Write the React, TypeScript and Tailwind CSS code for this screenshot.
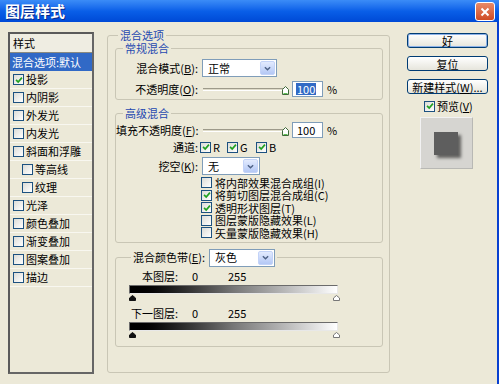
import React from 'react'

const Check = ({ on }: { on?: boolean }) => (
  <span className="w-[11px] h-[11px] border border-[#1c5180] bg-linear-to-br from-[#dcdcd7] to-white flex items-center justify-center shrink-0">
    {on && (
      <svg viewBox="0 0 9 9" className="w-[8px] h-[8px]">
        <path d="M1.2 4.3 L3.6 6.8 L7.8 1.8" stroke="#21a121" strokeWidth="1.9" fill="none" />
      </svg>
    )}
  </span>
)

const Select = ({ value, w }: { value: string; w: string }) => (
  <div className={`${w} h-[18px] bg-white border border-[#7f9db9] flex items-center shrink-0`}>
    <span className="flex-1 pl-[5px] text-[11px] leading-[13px]">{value}</span>
    <span className="w-[15px] h-[14px] mr-[1px] rounded-[2px] bg-linear-to-b from-[#e3ebfe] to-[#b4c8f5] border border-[#c3d3f8] flex items-center justify-center">
      <svg viewBox="0 0 8 5" className="w-[7px] h-[5px]">
        <path d="M1 1 L4 4 L7 1" stroke="#4d6185" strokeWidth="1.6" fill="none" />
      </svg>
    </span>
  </div>
)

const Slider = () => (
  <div className="flex items-center h-[16px] w-[87px] ml-[1px]">
    <div className="w-[81px] h-[3px] border-t border-t-[#9d9a8a] border-b border-b-white bg-[#dedbc9]" />
    <svg viewBox="0 0 7 9" className="w-[7px] h-[9px] -ml-[2px] mt-[2px]">
      <path d="M0.5 8.5 V3.5 L3.5 0.5 L6.5 3.5 V8.5 Z" fill="#ffffff" stroke="#3f6a3a" strokeWidth="1" />
      <path d="M1.5 7.5 H5.5" stroke="#5fbf55" strokeWidth="1" />
    </svg>
  </div>
)

const Num = ({ sel }: { sel?: boolean }) => (
  <div className="w-[31px] h-[16px] bg-white border border-[#7f9db9] flex items-center pl-[3px] ml-[2px]">
    <span className={sel ? 'bg-[#316ac5] text-white text-[11px] leading-[12px] px-[1px]' : 'text-[11px] leading-[12px] px-[1px]'}>100</span>
  </div>
)

const Label = ({ children }: { children: React.ReactNode }) => (
  <span className="w-[82px] text-right shrink-0 whitespace-nowrap">{children}</span>
)

const Legend = ({ children }: { children: React.ReactNode }) => (
  <legend className="ml-[7px] px-[2px] text-[#1f48b0] leading-[14px]">{children}</legend>
)

const LevelBar = ({ label }: { label: string }) => (
  <>
    <div className="flex items-center h-[13px]">
      <span className="w-[62px] text-right">{label}</span>
      <span className="ml-[14px] w-[36px]">0</span>
      <span>255</span>
    </div>
    <div className="ml-[13px] mt-[2px] w-[209px] h-[9px] border border-t-[#6b6b6b] border-l-[#6b6b6b] border-r-[#e8e8e8] border-b-[#e8e8e8] bg-linear-to-r from-black via-[#777] to-white" />
    <div className="ml-[13px] mt-[1px] w-[211px] h-[6px] flex justify-between">
      <svg viewBox="0 0 7 6" className="w-[7px] h-[6px]">
        <path d="M0.5 5.5 V3 L3.5 0.5 L6.5 3 V5.5 Z" fill="#111" stroke="#111" />
      </svg>
      <svg viewBox="0 0 7 6" className="w-[7px] h-[6px]">
        <path d="M0.5 5.5 V3 L3.5 0.5 L6.5 3 V5.5 Z" fill="#fff" stroke="#777" />
      </svg>
    </div>
  </>
)

const items: [string, boolean, boolean][] = [
  ['投影', true, false],
  ['内阴影', false, false],
  ['外发光', false, false],
  ['内发光', false, false],
  ['斜面和浮雕', false, false],
  ['等高线', false, true],
  ['纹理', false, true],
  ['光泽', false, false],
  ['颜色叠加', false, false],
  ['渐变叠加', false, false],
  ['图案叠加', false, false],
  ['描边', false, false],
]

const opts: [string, boolean][] = [
  ['将内部效果混合成组(I)', false],
  ['将剪切图层混合成组(C)', true],
  ['透明形状图层(T)', true],
  ['图层蒙版隐藏效果(L)', false],
  ['矢量蒙版隐藏效果(H)', false],
]

const Btn = ({ children, def }: { children: React.ReactNode; def?: boolean }) => (
  <div
    className={
      def
        ? 'h-[15px] rounded-[3px] border border-[#003c74] bg-linear-to-b from-white to-[#e6e5dc] shadow-[inset_0_0_0_1px_#8db2e8] flex items-center justify-center text-[11px] leading-[12px]'
        : 'h-[15px] rounded-[3px] border border-[#003c74] bg-linear-to-b from-white to-[#e6e5dc] flex items-center justify-center text-[11px] leading-[12px]'
    }
  >
    {children}
  </div>
)

export default function App() {
  return (
    <div className="w-[499px] h-[384px] bg-[#ece9d8] overflow-hidden flex flex-col font-['Noto_Sans_CJK_SC',sans-serif] text-[11px] leading-[13px] text-black">
      <div className="h-[22px] shrink-0 flex items-center justify-between pl-[5px] pr-[4px] bg-linear-to-b from-[#3b8cf7] via-[#0a5fe8] to-[#0049d6]">
        <span className="text-white text-[15px] font-bold leading-[18px] [text-shadow:1px_1px_0_#0a2a8a]">图层样式</span>
        <span className="w-[20px] h-[19px] rounded-[3px] border border-white bg-linear-to-b from-[#e88a68] to-[#cf4a22] flex items-center justify-center mt-[1px]">
          <svg viewBox="0 0 10 10" className="w-[10px] h-[10px]">
            <path d="M1.5 1.5 L8.5 8.5 M8.5 1.5 L1.5 8.5" stroke="white" strokeWidth="2" />
          </svg>
        </span>
      </div>

      <div className="flex-1 flex border-r-2 border-[#0840d0]">
        {/* style list */}
        <div className="ml-[8px] mt-[10px] w-[86px] h-[342px] border-2 border-t-[#5a5a5a] border-l-[#5a5a5a] border-r-[#666] border-b-[#666] flex flex-col bg-[#ece9d8]">
          <div className="h-[19px] flex items-center pl-[3px] border-b border-[#8a8a80] bg-[#efede2]">样式</div>
          <div className="h-[18px] flex items-center pl-[2px] bg-[#3169c6] text-white">混合选项:默认</div>
          {items.map(([t, on, sub]) => (
            <div key={t} className="h-[18px] flex items-center border-b border-[#f8f7f0]">
              <span className={sub ? 'ml-[12px]' : 'ml-[3px]'}>
                <Check on={on} />
              </span>
              <span className="ml-[2px]">{t}</span>
            </div>
          ))}
        </div>

        {/* main */}
        <fieldset className="ml-[13px] mt-[6px] w-[283px] h-[345px] border border-[#c9c6b5] rounded-[3px]">
          <legend className="ml-[10px] px-[2px] text-[#1f48b0] leading-[14px]">混合选项</legend>

          <fieldset className="ml-[7px] -mt-[1px] w-[268px] border border-[#c9c6b5] rounded-[3px] pb-[2px]">
            <Legend>常规混合</Legend>
            <div className="flex items-center mt-[4px] h-[18px]">
              <Label>混合模式(<u>B</u>):</Label>
              <span className="ml-[4px]">
                <Select value="正常" w="w-[75px]" />
              </span>
            </div>
            <div className="flex items-center mt-[4px] h-[16px]">
              <Label>不透明度(<u>O</u>):</Label>
              <span className="ml-[4px] flex items-center">
                <Slider />
                <Num sel />
                <span className="ml-[4px]">%</span>
              </span>
            </div>
          </fieldset>

          <fieldset className="ml-[7px] mt-[6px] w-[268px] border border-[#c9c6b5] rounded-[3px] pb-[3px]">
            <Legend>高级混合</Legend>
            <div className="flex items-center mt-[2px] h-[16px]">
              <Label>填充不透明度(<u>F</u>):</Label>
              <span className="ml-[4px] flex items-center">
                <Slider />
                <Num />
                <span className="ml-[4px]">%</span>
              </span>
            </div>
            <div className="flex items-center mt-[2px] h-[14px]">
              <Label>通道:</Label>
              <span className="ml-[2px] flex items-center">
                <Check on />
                <span className="ml-[2px] w-[14px]">R</span>
                <Check on />
                <span className="ml-[2px] w-[16px]">G</span>
                <Check on />
                <span className="ml-[2px]">B</span>
              </span>
            </div>
            <div className="flex items-center mt-[3px] h-[18px]">
              <Label>挖空(<u>K</u>):</Label>
              <span className="ml-[4px]">
                <Select value="无" w="w-[58px]" />
              </span>
            </div>
            <div className="flex flex-col ml-[85px] mt-[1px]">
              {opts.map(([t, on]) => (
                <div key={t} className="h-[12px] flex items-center mt-[0.5px] leading-[12px]">
                  <Check on={on} />
                  <span className="ml-[3px] whitespace-nowrap leading-[12px]">{t}</span>
                </div>
              ))}
            </div>
          </fieldset>

          <fieldset className="ml-[7px] mt-[6px] w-[268px] border border-[#c9c6b5] rounded-[3px] pb-[8px]">
            <legend className="ml-[15px] px-[2px] flex items-center">
              <span className="mr-[4px] whitespace-nowrap">混合颜色带(<u>E</u>):</span>
              <Select value="灰色" w="w-[66px]" />
            </legend>
            <div className="mt-[3px]">
              <LevelBar label="本图层:" />
            </div>
            <div className="mt-[6px]">
              <LevelBar label="下一图层:" />
            </div>
          </fieldset>
        </fieldset>

        {/* buttons */}
        <div className="ml-[17px] mt-[11px] w-[81px] flex flex-col">
          <Btn def>好</Btn>
          <div className="mt-[8px]">
            <Btn>复位</Btn>
          </div>
          <div className="mt-[8px]">
            <Btn>新建样式(<u>W</u>)...</Btn>
          </div>
          <div className="mt-[6px] h-[12px] flex items-center ml-[17px]">
            <Check on />
            <span className="ml-[2px]">预览(<u>V</u>)</span>
          </div>
          <div className="mt-[5px] ml-[13px] w-[53px] h-[52px] bg-[#d6d5d1] border border-t-[#f2f2f2] border-l-[#f2f2f2] border-r-[#b8b8b4] border-b-[#b8b8b4] pt-[14px] pl-[13px]">
            <div className="w-[24px] h-[23px] bg-[#5e5e5e] shadow-[3px_3px_3px_rgba(0,0,0,0.55)]" />
          </div>
        </div>
      </div>
    </div>
  )
}
